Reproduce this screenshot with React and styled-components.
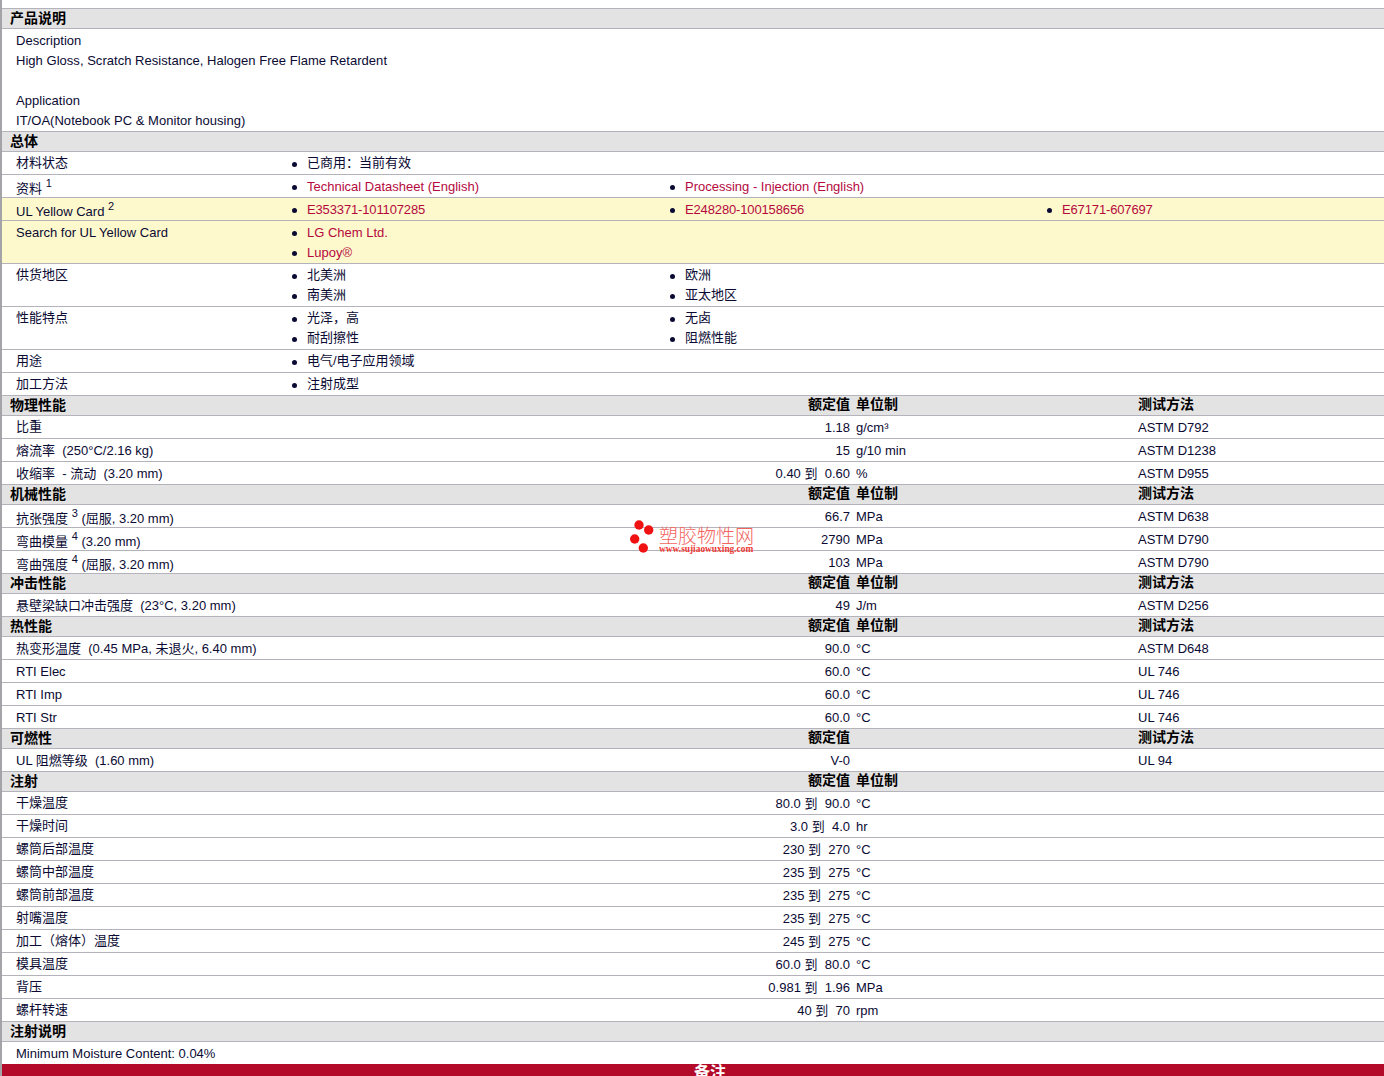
import React from "react";
import styled, { createGlobalStyle } from "styled-components";

const Global = createGlobalStyle`
  html, body {
    margin: 0;
    height: 1076px;
    overflow: hidden;
    background: #fff;
  }
  #root {
    height: 1076px;
    overflow: hidden;
  }
`;

const Page = styled.div`
  position: relative;
  box-sizing: border-box;
  height: 1076px;
  padding-top: 8px;
  border-left: 2px solid #a3a3a8;
  font-family: "Liberation Sans", "Noto Sans CJK SC", sans-serif;
  font-size: 13px;
  line-height: 20px;
  color: #0a0a33;
`;

const SectionBar = styled.div`
  display: grid;
  grid-template-columns: 506px 334px 288px 1fr;
  box-sizing: border-box;
  height: ${(p) => (p.$first ? "21px" : "20px")};
  padding-left: 8px;
  background: #e4e3e3;
  border-bottom: 1px solid #b4b3bb;
  border-top: ${(p) => (p.$first ? "1px solid #b4b3bb" : "0")};
  font-size: 14px;
  font-weight: 700;
  line-height: 18px;
  color: #000;
`;

const BarColumn = styled.span`
  line-height: 16px;
`;

const BarValue = styled(BarColumn)`
  text-align: right;
`;

const BarUnit = styled(BarColumn)`
  padding-left: 6px;
`;

const TextRow = styled.div`
  padding: 2px 14px 0;
  border-bottom: 1px solid #b4b3bb;
  white-space: pre;
  letter-spacing: 0.03px;
`;

const InfoRow = styled.div`
  display: grid;
  grid-template-columns: 276px 1fr;
  padding-left: 14px;
  border-bottom: 1px solid #b4b3bb;
  background: ${(p) => (p.$note ? "#fef9cd" : "transparent")};
`;

const InfoList = styled.ul`
  display: grid;
  grid-template-columns: ${(p) =>
    p.$columns === 1 ? "378px" : p.$columns === 2 ? "378px 377px" : "378px 377px 1fr"};
  margin: 0;
  padding: ${(p) => (p.$links ? "2px 0 0" : "1px 0")};
  list-style: none;
`;

const InfoItem = styled.li`
  position: relative;
  height: 20px;
  padding-left: 15px;

  &::before {
    content: "";
    position: absolute;
    left: 0;
    top: ${(p) => (p.$links ? "8px" : "9px")};
    width: 5px;
    height: 5px;
    border-radius: 50%;
    background: #0a0a33;
  }
`;

const DocLink = styled.a`
  color: #b5093e;
  text-decoration: none;
  letter-spacing: ${(p) => (p.$tight ? "-0.14px" : "0")};
`;

const Note = styled.sup`
  font-size: 11px;
  line-height: 0;
  vertical-align: 6px;
`;

const LabelText = styled.div`
  box-sizing: border-box;
  height: 22px;
  padding-top: ${(p) => p.$drop}px;
`;

const DataRow = styled.div`
  display: grid;
  grid-template-columns: 500px 334px 288px 1fr;
  height: 22px;
  padding-left: 14px;
  border-bottom: ${(p) => (p.$last ? "0" : "1px solid #b4b3bb")};
  white-space: pre;
`;

const DataCell = styled.span`
  padding-top: 2px;
`;

const DataValue = styled(DataCell)`
  text-align: right;
`;

const DataUnit = styled(DataCell)`
  padding-left: 6px;
`;

const NotesBar = styled.div`
  height: 19px;
  padding: 1px 0 0 692px;
  background: #b20a28;
  color: #fff;
  font-size: 16px;
  font-weight: 700;
  line-height: 16px;
  overflow: hidden;
`;

const Watermark = styled.div`
  position: absolute;
  left: 626px;
  top: 519px;
  display: flex;
  align-items: flex-start;
  gap: 3px;
  pointer-events: none;
`;

const WatermarkText = styled.div`
  display: flex;
  flex-direction: column;
  padding-top: 9px;
`;

const WatermarkName = styled.span`
  font-size: 19px;
  font-weight: 300;
  line-height: 17px;
  color: #f2655e;
`;

const WatermarkUrl = styled.span`
  font-family: "Liberation Serif", serif;
  font-size: 9.4px;
  font-weight: 700;
  line-height: 9px;
  color: #ee3b36;
`;

const physical = {
  title: "物理性能",
  rows: [
    { label: "比重", value: "1.18", unit: "g/cm³", test: "ASTM D792" },
    { label: "熔流率  (250°C/2.16 kg)", value: "15", unit: "g/10 min", test: "ASTM D1238" },
    { label: "收缩率  - 流动  (3.20 mm)", value: "0.40 到  0.60", unit: "%", test: "ASTM D955" },
  ],
};

const mechanical = {
  title: "机械性能",
  rows: [
    { label: "抗张强度", sup: "3", tail: "(屈服, 3.20 mm)", value: "66.7", unit: "MPa", test: "ASTM D638" },
    { label: "弯曲模量", sup: "4", tail: "(3.20 mm)", value: "2790", unit: "MPa", test: "ASTM D790" },
    { label: "弯曲强度", sup: "4", tail: "(屈服, 3.20 mm)", value: "103", unit: "MPa", test: "ASTM D790" },
  ],
};

const impact = {
  title: "冲击性能",
  rows: [
    { label: "悬壁梁缺口冲击强度  (23°C, 3.20 mm)", value: "49", unit: "J/m", test: "ASTM D256" },
  ],
};

const thermal = {
  title: "热性能",
  rows: [
    { label: "热变形温度  (0.45 MPa, 未退火, 6.40 mm)", value: "90.0", unit: "°C", test: "ASTM D648" },
    { label: "RTI Elec", value: "60.0", unit: "°C", test: "UL 746" },
    { label: "RTI Imp", value: "60.0", unit: "°C", test: "UL 746" },
    { label: "RTI Str", value: "60.0", unit: "°C", test: "UL 746" },
  ],
};

const flammability = {
  title: "可燃性",
  noUnit: true,
  rows: [{ label: "UL 阻燃等级  (1.60 mm)", value: "V-0", unit: "", test: "UL 94" }],
};

const injection = {
  title: "注射",
  noTest: true,
  rows: [
    { label: "干燥温度", value: "80.0 到  90.0", unit: "°C" },
    { label: "干燥时间", value: "3.0 到  4.0", unit: "hr" },
    { label: "螺筒后部温度", value: "230 到  270", unit: "°C" },
    { label: "螺筒中部温度", value: "235 到  275", unit: "°C" },
    { label: "螺筒前部温度", value: "235 到  275", unit: "°C" },
    { label: "射嘴温度", value: "235 到  275", unit: "°C" },
    { label: "加工（熔体）温度", value: "245 到  275", unit: "°C" },
    { label: "模具温度", value: "60.0 到  80.0", unit: "°C" },
    { label: "背压", value: "0.981 到  1.96", unit: "MPa" },
    { label: "螺杆转速", value: "40 到  70", unit: "rpm" },
  ],
};

// footnoted labels sit lowest, plain chinese ones a pixel higher than latin
const labelDrop = (label, sup) => (sup ? 4 : /[a-z0-9]/i.test(label) ? 2 : 1);

const DataSection = ({ section }) => (
  <>
    <SectionBar>
      <span>{section.title}</span>
      <BarValue>额定值</BarValue>
      <BarUnit>{section.noUnit ? "" : "单位制"}</BarUnit>
      <BarColumn>{section.noTest ? "" : "测试方法"}</BarColumn>
    </SectionBar>
    {section.rows.map((row) => (
      <DataRow key={row.label}>
        <LabelText $drop={labelDrop(row.label, row.sup)}>
          {row.label}
          {row.sup && (
            <>
              {" "}
              <Note>{row.sup}</Note> {row.tail}
            </>
          )}
        </LabelText>
        <DataValue>{row.value}</DataValue>
        <DataUnit>{row.unit}</DataUnit>
        <DataCell>{row.test || ""}</DataCell>
      </DataRow>
    ))}
  </>
);

const Info = ({ label, sup, items, links, note, columns, tight }) => (
  <InfoRow $note={note}>
    <LabelText $drop={labelDrop(label, sup)}>
      {label}
      {sup && (
        <>
          {" "}
          <Note>{sup}</Note>
        </>
      )}
    </LabelText>
    <InfoList $columns={columns} $links={links}>
      {items.map((item) => (
        <InfoItem key={item} $links={links}>
          {links ? (
            <DocLink href="#" $tight={tight}>
              {item}
            </DocLink>
          ) : (
            item
          )}
        </InfoItem>
      ))}
    </InfoList>
  </InfoRow>
);

export default function App() {
  return (
    <Page>
      <Global />
      <SectionBar $first>
        <span>产品说明</span>
      </SectionBar>
      <TextRow>
        {"Description\nHigh Gloss, Scratch Resistance, Halogen Free Flame Retardent\n\nApplication\nIT/OA(Notebook PC & Monitor housing)"}
      </TextRow>
      <SectionBar>
        <span>总体</span>
      </SectionBar>
      <Info label="材料状态" items={["已商用：当前有效"]} />
      <Info label="资料" sup="1" links items={["Technical Datasheet (English)", "Processing - Injection (English)"]} />
      <Info label="UL Yellow Card" sup="2" links note tight items={["E353371-101107285", "E248280-100158656", "E67171-607697"]} />
      <Info label="Search for UL Yellow Card" links note columns={1} items={["LG Chem Ltd.", "Lupoy®"]} />
      <Info label="供货地区" columns={2} items={["北美洲", "欧洲", "南美洲", "亚太地区"]} />
      <Info label="性能特点" columns={2} items={["光泽，高", "无卤", "耐刮擦性", "阻燃性能"]} />
      <Info label="用途" items={["电气/电子应用领域"]} />
      <Info label="加工方法" items={["注射成型"]} />
      <DataSection section={physical} />
      <DataSection section={mechanical} />
      <DataSection section={impact} />
      <DataSection section={thermal} />
      <DataSection section={flammability} />
      <DataSection section={injection} />
      <SectionBar>
        <span>注射说明</span>
      </SectionBar>
      <DataRow $last>
        <LabelText $drop={2}>Minimum Moisture Content: 0.04%</LabelText>
      </DataRow>
      <NotesBar>备注</NotesBar>
      <Watermark>
        <svg width="28" height="34" viewBox="0 0 28 34">
          <circle cx="11" cy="6" r="4.7" fill="#f01212" />
          <circle cx="20.7" cy="11" r="4.7" fill="#f01212" />
          <circle cx="6.7" cy="20" r="4.7" fill="#f01212" />
          <circle cx="15.3" cy="29" r="4.7" fill="#f01212" />
        </svg>
        <WatermarkText>
          <WatermarkName>塑胶物性网</WatermarkName>
          <WatermarkUrl>www.sujiaowuxing.com</WatermarkUrl>
        </WatermarkText>
      </Watermark>
    </Page>
  );
}
